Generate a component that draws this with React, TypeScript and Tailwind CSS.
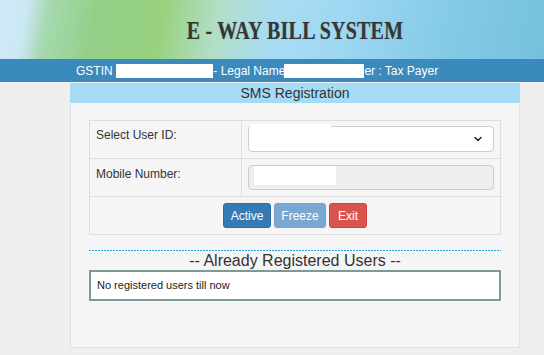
import React from "react";
import { ChevronDown } from "lucide-react";

export default function App() {
  return (
    <div className="w-[544px] h-[355px] overflow-hidden bg-[#efefef] font-['Liberation_Sans',Arial,sans-serif] text-[#333]">
      {/* Banner */}
      <div className="h-[59px] flex items-center bg-[linear-gradient(100deg,#cfe8f6_0%,#cde8f5_5%,#a6d9b0_9%,#93cf87_18%,#98d27f_30%,#b2dec8_40%,#a8dcf3_50%,#9fd8f2_62%,#86cbe8_80%,#74c1de_100%)]">
        <div className="w-full flex justify-center pl-[46px]">
          <span className="font-['Liberation_Serif',serif] font-bold text-[20px] text-[#363636] tracking-[0.2px] scale-y-[1.28] inline-block [text-shadow:0_0_1px_rgba(0,0,0,0.25)]">
            E - WAY BILL SYSTEM
          </span>
        </div>
      </div>

      {/* GSTIN bar */}
      <div className="h-[23px] bg-[#3a8abd] text-white text-[12px] flex items-center pl-[76px] whitespace-nowrap">
        <span>GSTIN :</span>
        <span className="inline-block w-[97px] h-[14px] bg-white ml-[-3px]" />
        <span>- Legal Name</span>
        <span className="inline-block w-[80px] h-[14px] bg-white ml-[-1px]" />
        <span>er : Tax Payer</span>
      </div>

      {/* Panel */}
      <div className="ml-[70px] w-[450px] mt-[1px]">
        <div className="h-[20px] bg-[#a5dbf5] text-[14px] text-[#333] flex items-center justify-center">
          SMS Registration
        </div>
        <div className="h-[245px] bg-[#f5f5f5] border-x border-b border-[#e2e2e2] px-[18px] pt-[17px]">
          {/* Form table */}
          <div className="border border-[#dddddd] text-[12px]">
            <div className="grid grid-cols-[152px_1fr] h-[38px] border-b border-[#dddddd]">
              <div className="border-r border-[#dddddd] pl-[6px] pt-[5px]">Select User ID:</div>
              <div className="relative px-[6px] pt-[5px]">
                <div className="h-[26px] bg-white border border-[#cccccc] rounded-[4px] flex items-center justify-end pr-[9px]">
                  <ChevronDown size={12} strokeWidth={3} className="text-[#222]" />
                </div>
                <div className="absolute left-[8px] top-[3px] w-[81px] h-[14px] bg-white" />
              </div>
            </div>
            <div className="grid grid-cols-[152px_1fr] h-[38px] border-b border-[#dddddd]">
              <div className="border-r border-[#dddddd] pl-[6px] pt-[6px]">Mobile Number:</div>
              <div className="relative px-[6px] pt-[6px]">
                <div className="h-[25px] bg-[#eeeeee] border border-[#cccccc] rounded-[4px]" />
                <div className="absolute left-[12px] top-[7px] w-[82px] h-[19px] bg-white" />
              </div>
            </div>
            <div className="h-[37px] flex items-center justify-center gap-[3px]">
              <button className="h-[25px] w-[48px] rounded-[3px] bg-[#337ab7] border border-[#2e6da4] text-white text-[12px]">Active</button>
              <button className="h-[25px] w-[52px] rounded-[3px] bg-[#7aa7d1] border border-[#7aa2c8] text-white text-[12px]">Freeze</button>
              <button className="h-[25px] w-[38px] rounded-[3px] bg-[#d9534f] border border-[#d43f3a] text-white text-[12px]">Exit</button>
            </div>
          </div>

          <div className="mt-[15px] h-[1px] bg-[repeating-linear-gradient(90deg,#22a2d8_0px,#22a2d8_2px,transparent_2px,transparent_3px)]" />
          <div className="h-[19px] flex items-center justify-center text-[16px] text-[#333]">
            -- Already Registered Users --
          </div>
          <div className="h-[31px] bg-white border-2 border-[#7d9b96] flex items-center pl-[6px] text-[11px] text-[#222]">
            No registered users till now
          </div>
        </div>
      </div>
    </div>
  );
}
